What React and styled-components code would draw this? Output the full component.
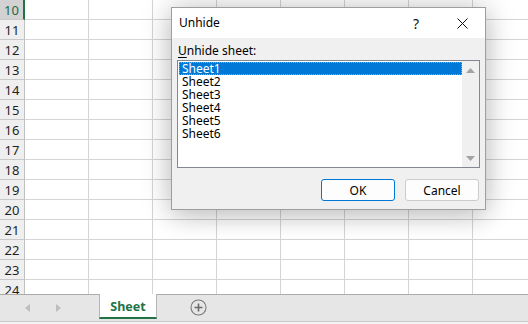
import React from "react";
import styled, { createGlobalStyle } from "styled-components";

const GlobalStyle = createGlobalStyle`
  html, body { margin: 0; padding: 0; background: #ffffff; }
  body { font-family: "Noto Sans", "DejaVu Sans", sans-serif; }
  * { box-sizing: border-box; }
`;

const Window = styled.div`
  position: relative;
  width: 528px;
  height: 324px;
  overflow: hidden;
  display: flex;
  flex-direction: column;
  background: #ffffff;
`;

const Grid = styled.div`
  height: 294px;
  overflow: hidden;
  display: flex;
  flex-direction: column;
`;

const Row = styled.div`
  display: flex;
  height: 20px;
  flex: none;
`;

const RowHeader = styled.div`
  width: 25px;
  height: 20px;
  flex: none;
  display: flex;
  align-items: center;
  justify-content: center;
  font-size: 13px;
  padding-top: 1px;
  color: ${(p) => (p.$active ? "#1b6a3f" : "#1f1f1f")};
  background: ${(p) => (p.$active ? "#d2d2d2" : "#efefef")};
  border-bottom: 1px solid #c8c8c8;
  border-right: ${(p) => (p.$active ? "2px solid #217346" : "1px solid #c0c0c0")};
`;

const Cell = styled.div`
  width: 64px;
  height: 20px;
  flex: none;
  border-right: 1px solid #d4d4d4;
  border-bottom: 1px solid #d4d4d4;
`;

const TabBar = styled.div`
  height: 28px;
  flex: none;
  display: flex;
  align-items: stretch;
  background: #e6e6e6;
  border-top: 1px solid #ababab;
  border-bottom: 1px solid #c9c9c9;
`;

const NavArea = styled.div`
  width: 99px;
  display: flex;
  align-items: center;
  padding-left: 25px;
  gap: 24px;
  margin-top: -1px;
`;

const NavArrow = styled.svg`
  width: 6px;
  height: 8px;
  display: block;
`;

const SheetTab = styled.div`
  width: 58px;
  margin-top: -1px;
  height: 25px;
  background: #ffffff;
  border-left: 1px solid #b5b5b5;
  border-right: 1px solid #b5b5b5;
  border-bottom: 2px solid #217346;
  display: flex;
  align-items: center;
  justify-content: center;
  padding-top: 2px;
  font-weight: 700;
  font-size: 12.5px;
  color: #217346;
`;

const AddButton = styled.div`
  margin-left: 33px;
  display: flex;
  align-items: center;
  margin-top: -1px;
`;

const BottomStrip = styled.div`
  flex: 1;
  background: #f3f3f3;
`;

const Dialog = styled.div`
  position: absolute;
  left: 171px;
  top: 7px;
  width: 315px;
  height: 203px;
  border: 1px solid #9e9e9e;
  background: #f0f0f0;
  box-shadow: 0 0 30px rgba(0, 0, 0, 0.2), 0 8px 22px rgba(0, 0, 0, 0.12);
  display: flex;
  flex-direction: column;
  font-size: 12px;
  color: #000;
`;

const TitleBar = styled.div`
  height: 30px;
  flex: none;
  background: #ffffff;
  display: flex;
  align-items: center;
  padding-left: 7px;
`;

const Title = styled.div`
  flex: 1;
  font-size: 12px;
  padding-bottom: 1px;
`;

const TitleButton = styled.div`
  width: 46px;
  height: 30px;
  display: flex;
  align-items: center;
  justify-content: center;
  font-size: 14px;
  color: #111;
`;

const Body = styled.div`
  flex: 1;
  display: flex;
  flex-direction: column;
  padding: 6px 5px 7px 5px;
`;

const Label = styled.div`
  line-height: 14px;
  height: 14px;
  padding-left: 1px;
  font-size: 12px;
  u { text-decoration-thickness: 1px; text-underline-offset: 2px; }
`;

const ListBox = styled.div`
  margin-top: 2px;
  height: 108px;
  border: 1px solid #828790;
  background: #ffffff;
  display: flex;
`;

const List = styled.div`
  flex: 1;
  padding: 1px 0 0 1px;
  display: flex;
  flex-direction: column;
`;

const Item = styled.div`
  height: 13px;
  line-height: 13px;
  padding-left: 3px;
  font-size: 12px;
  color: ${(p) => (p.$selected ? "#ffffff" : "#000000")};
  background: ${(p) => (p.$selected ? "#0078d7" : "transparent")};
  outline: ${(p) => (p.$selected ? "1px dotted #ff8c28" : "none")};
  outline-offset: -1px;
  white-space: nowrap;
`;

const ScrollBar = styled.div`
  width: 17px;
  flex: none;
  background: #f0f0f0;
  display: flex;
  flex-direction: column;
  justify-content: space-between;
  align-items: center;
  padding: 7px 0 6px;
`;

const Buttons = styled.div`
  margin-top: 11px;
  display: flex;
  justify-content: flex-end;
  gap: 10px;
  padding-right: 1px;
`;

const Button = styled.div`
  width: 74px;
  height: 22px;
  border: 1px solid ${(p) => (p.$primary ? "#0078d7" : "#cccccc")};
  border-radius: 3px;
  background: #fdfdfd;
  display: flex;
  align-items: center;
  justify-content: center;
  font-size: 12px;
  color: #000;
`;

const rows = Array.from({ length: 15 }, (_, i) => 10 + i);
const cols = Array.from({ length: 8 }, (_, i) => i);
const sheets = ["Sheet1", "Sheet2", "Sheet3", "Sheet4", "Sheet5", "Sheet6"];

export default function App() {
  return (
    <>
      <GlobalStyle />
      <Window>
        <Grid>
          {rows.map((r) => (
            <Row key={r}>
              <RowHeader $active={r === 10}>{r}</RowHeader>
              {cols.map((c) => (
                <Cell key={c} />
              ))}
            </Row>
          ))}
        </Grid>
        <TabBar>
          <NavArea>
            <NavArrow viewBox="0 0 6 8">
              <path d="M5 0 L5 8 L0 4 Z" fill="#bdbdbd" />
            </NavArrow>
            <NavArrow viewBox="0 0 6 8">
              <path d="M1 0 L1 8 L6 4 Z" fill="#bdbdbd" />
            </NavArrow>
          </NavArea>
          <SheetTab>Sheet</SheetTab>
          <AddButton>
            <svg width="17" height="17" viewBox="0 0 17 17">
              <circle cx="8.5" cy="8.5" r="7.5" fill="none" stroke="#7a7a7a" strokeWidth="1.1" />
              <path d="M8.5 4.5 V12.5 M4.5 8.5 H12.5" stroke="#6a6a6a" strokeWidth="1.6" />
            </svg>
          </AddButton>
        </TabBar>
        <BottomStrip />
        <Dialog>
          <TitleBar>
            <Title>Unhide</Title>
            <TitleButton>?</TitleButton>
            <TitleButton>
              <svg width="11" height="11" viewBox="0 0 11 11">
                <path d="M0.5 0.5 L10.5 10.5 M10.5 0.5 L0.5 10.5" stroke="#111" strokeWidth="1" />
              </svg>
            </TitleButton>
          </TitleBar>
          <Body>
            <Label>
              <u>U</u>nhide sheet:
            </Label>
            <ListBox>
              <List>
                {sheets.map((s, i) => (
                  <Item key={s} $selected={i === 0}>
                    {s}
                  </Item>
                ))}
              </List>
              <ScrollBar>
                <svg width="9" height="5" viewBox="0 0 9 5">
                  <path d="M0 5 L4.5 0 L9 5 Z" fill="#a3a3a3" />
                </svg>
                <svg width="9" height="5" viewBox="0 0 9 5">
                  <path d="M0 0 L4.5 5 L9 0 Z" fill="#a3a3a3" />
                </svg>
              </ScrollBar>
            </ListBox>
            <Buttons>
              <Button $primary>OK</Button>
              <Button>Cancel</Button>
            </Buttons>
          </Body>
        </Dialog>
      </Window>
    </>
  );
}
